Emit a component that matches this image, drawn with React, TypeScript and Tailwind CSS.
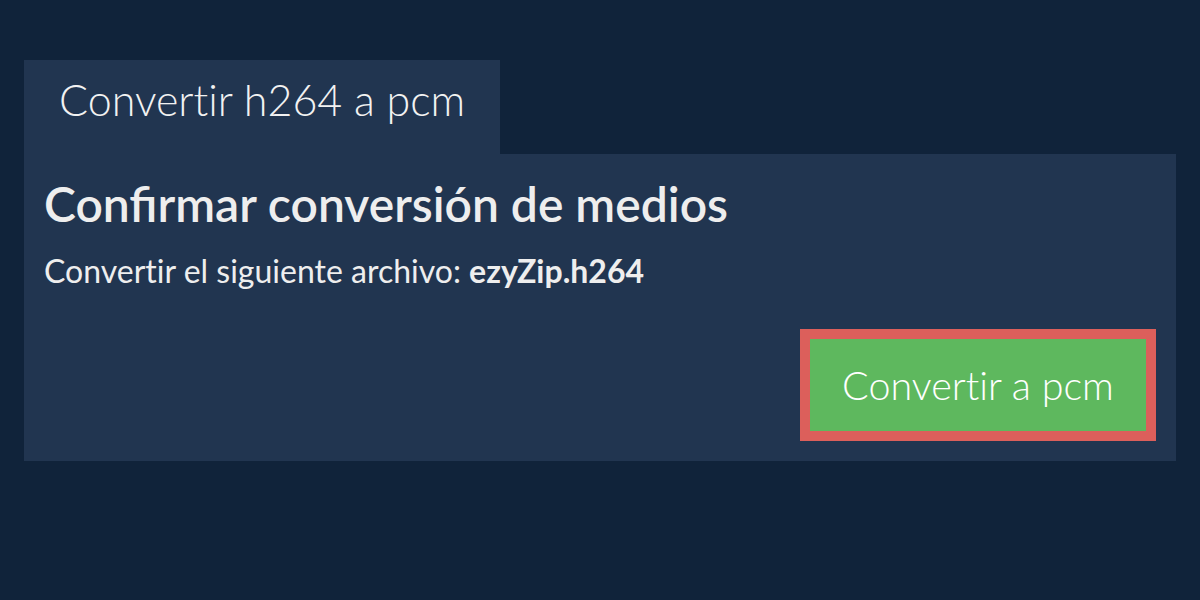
export default function App() {
  return (
    <div
      className="w-[1200px] h-[600px] bg-[#10233a] px-6 pt-[60px]"
      style={{ fontFamily: 'Lato, "Noto Sans", sans-serif' }}
    >
      <div className="flex">
        <div className="w-[476px] h-[94px] bg-[#213550] pl-[35px] pt-[18px]">
          <span className="block text-[43px] font-light leading-none text-[#f2f2f2] [font-variant-ligatures:none]">
            Convertir h264 a pcm
          </span>
        </div>
      </div>
      <section className="w-[1152px] h-[307px] bg-[#213550] px-5 pt-[26px] pb-5 flex flex-col">
        <h1 className="text-[48px] font-semibold leading-none text-[#eeeeee]">Confirmar conversión de medios</h1>
        <p className="mt-[27px] text-[32px] leading-none text-[#eeeeee] [font-variant-ligatures:none]">
          Convertir el siguiente archivo: <span className="font-bold">ezyZip.h264</span>
        </p>
        <div className="mt-auto flex justify-end">
          <button className="w-[356px] h-[112px] border-[10px] border-[#dc5f5b] bg-[#5eb85e] text-[39.5px] font-light leading-none text-white flex items-center justify-center [font-variant-ligatures:none]">
            Convertir a pcm
          </button>
        </div>
      </section>
    </div>
  );
}
